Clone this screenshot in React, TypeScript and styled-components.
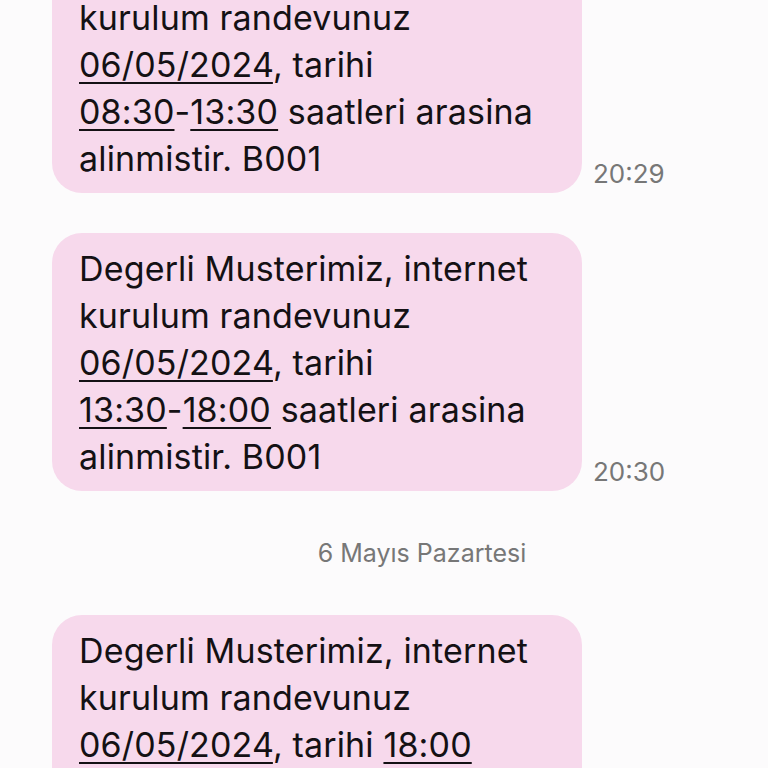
import styled, { createGlobalStyle } from 'styled-components';

const GlobalStyle = createGlobalStyle`
  html, body {
    margin: 0;
    padding: 0;
    background: #fcfbfc;
    overflow: hidden;
  }
`;

const messages = [
  { from: '08:30', to: '13:30', time: '20:29' },
  { from: '13:30', to: '18:00', time: '20:30' },
];

const App = () => {
  return (
    <Root>
      <GlobalStyle />
      <Thread>
        {messages.map((m) => (
          <Row key={m.time + m.from}>
            <Bubble>
              Degerli Musterimiz, internet kurulum randevunuz <Link>06/05/2024</Link>, tarihi{' '}
              <NoWrap>
                <Link>{m.from}</Link>-<Link>{m.to}</Link>
              </NoWrap>{' '}
              saatleri arasina alinmistir. B001
            </Bubble>
            <Time>{m.time}</Time>
          </Row>
        ))}
        <DayDivider>6 Mayıs Pazartesi</DayDivider>
        <Row>
          <Bubble>
            Degerli Musterimiz, internet kurulum randevunuz <Link>06/05/2024</Link>, tarihi{' '}
            <Link>18:00</Link>{' '}
            <NoWrap>
              -<Link>20:00</Link>
            </NoWrap>{' '}
            saatleri arasina alinmistir. B001
          </Bubble>
          <Time>09:12</Time>
        </Row>
      </Thread>
    </Root>
  );
};

export default App;

const Root = styled.div`
  width: 768px;
  height: 768px;
  overflow: hidden;
  background: #fcfbfc;
  font-family: Inter, 'Noto Sans', sans-serif;
`;

const Thread = styled.div`
  margin-top: -65px;
  padding-left: 52px;
  display: flex;
  flex-direction: column;
`;

const Row = styled.div`
  display: flex;
  align-items: flex-end;
  margin-bottom: 40px;
`;

const Bubble = styled.div`
  width: 530px;
  box-sizing: border-box;
  padding: 12px 30px 11px 27px;
  background: #f7d9ec;
  border-radius: 30px;
  color: #141114;
  font-size: 34px;
  letter-spacing: 0.15px;
  line-height: 47px;
`;

const NoWrap = styled.span`
  white-space: nowrap;
`;

const Link = styled.span`
  text-decoration: underline;
  text-decoration-thickness: 2px;
  text-underline-offset: 5px;
`;

const Time = styled.div`
  margin: 0 0 4px 11px;
  color: #777;
  font-size: 26px;
  line-height: 30px;
`;

const DayDivider = styled.div`
  width: 740px;
  text-align: center;
  margin: 7px 0 47px;
  color: #777;
  font-size: 25px;
  line-height: 30px;
`;
